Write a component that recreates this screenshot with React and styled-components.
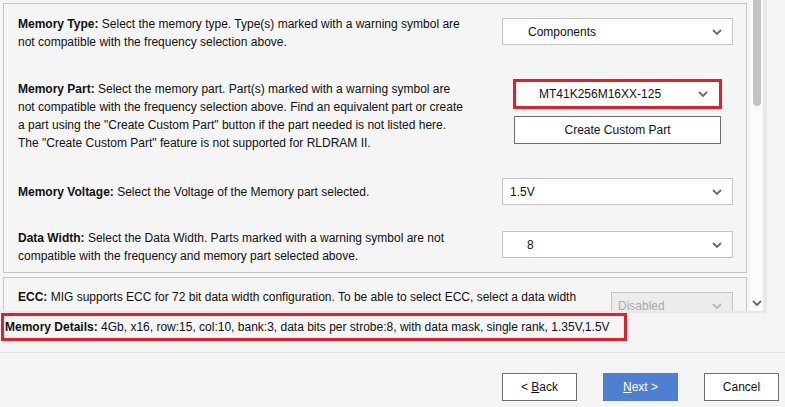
import React from "react";
import styled, { createGlobalStyle } from "styled-components";

const Global = createGlobalStyle`
  html, body { margin: 0; padding: 0; background: #f5f5f5; }
  body { font-family: "Liberation Sans", Arial, sans-serif; font-size: 12px; color: #111; }
  * { box-sizing: border-box; }
`;

const Page = styled.div`
  width: 785px;
  height: 407px;
  display: flex;
  flex-direction: column;
  overflow: hidden;
`;

const ScrollPane = styled.div`
  width: 767px;
  height: 313px;
  display: flex;
  border-right: 4px solid #e8e8e8;
  border-bottom: 2px solid #e8e8e8;
`;

const Content = styled.div`
  width: 750px;
  height: 311px;
  overflow: hidden;
  padding: 3px 3px 0 3px;
  display: flex;
  flex-direction: column;
  gap: 4px;
`;

const Panel = styled.div`
  border: 1px solid #c6c6c6;
  padding: ${(p) => p.$pad};
  flex-shrink: 0;
`;

const Row = styled.div`
  display: grid;
  grid-template-columns: 1fr ${(p) => p.$ctl || 231}px;
  align-items: start;
  margin-top: ${(p) => p.$mt || 0}px;
  padding-left: 14px;
  padding-right: 13px;
`;

const Desc = styled.div`
  padding-top: ${(p) => p.$off || 0}px;
  line-height: 18px;
  white-space: nowrap;
  color: #111;
  b { font-weight: bold; }
`;

const ControlCell = styled.div`
  padding-top: ${(p) => p.$off || 0}px;
  display: flex;
  flex-direction: column;
  align-items: center;
  gap: 7px;
`;

const Select = styled.div`
  position: relative;
  width: ${(p) => p.$w || 231}px;
  height: ${(p) => (p.$hl ? 30 : 27)}px;
  background: ${(p) => (p.$disabled ? "#ececec" : "#fff")};
  border: ${(p) => (p.$hl ? "3px solid #e61e2a" : "1px solid #c4c4c4")};
  display: flex;
  align-items: center;
  padding-left: ${(p) => p.$indent}px;
  padding-right: 10px;
  color: ${(p) => (p.$disabled ? "#a9a9a9" : "#111")};
  font-size: 12px;
  svg { position: absolute; right: ${(p) => (p.$hl ? 11 : 10)}px; top: 50%; margin-top: -3px; }
`;

const Button = styled.button`
  font-family: "Liberation Sans", Arial, sans-serif;
  font-size: 12px;
  width: ${(p) => p.$w || 75}px;
  height: 28px;
  background: ${(p) => (p.$primary ? "#4f7fd1" : "#fff")};
  color: ${(p) => (p.$primary ? "#fff" : "#111")};
  border: 1px solid ${(p) => (p.$primary ? "#4f7fd1" : "#6e6e6e")};
  padding: 0;
  cursor: default;
  u { text-decoration: underline; }
`;

const Scrollbar = styled.div`
  width: 13px;
  height: 311px;
  background: #fbfbfb;
  display: flex;
  flex-direction: column;
  justify-content: space-between;
  align-items: center;
  padding-bottom: 5px;
`;

const Thumb = styled.div`
  width: 8px;
  height: 106px;
  background: #c3c3c3;
  border-radius: 0 0 4px 4px;
`;

const Details = styled.div`
  align-self: flex-start;
  margin-left: 1px;
  height: 28px;
  border: 3px solid #e61e2a;
  padding: 0 14px 0 1px;
  line-height: 22px;
  white-space: nowrap;
  b { font-weight: bold; }
`;

const Separator = styled.div`
  margin-top: 11px;
  height: 1px;
  background: #e1e1e1;
`;

const ButtonBar = styled.div`
  margin-top: 20px;
  display: flex;
  justify-content: flex-end;
  gap: 26px;
  padding-right: 6px;
`;

const Chevron = ({ color = "#6a6a6a" }) => (
  <svg width="10" height="6" viewBox="0 0 10 6">
    <polyline points="1,1 5,5 9,1" fill="none" stroke={color} strokeWidth="1.8" />
  </svg>
);

export default function App() {
  return (
    <Page>
      <Global />
      <ScrollPane>
        <Content>
          <Panel $pad="11px 0 7px 0">
            <Row>
              <Desc>
                <b>Memory Type:</b> Select the memory type. Type(s) marked with a warning symbol are
                <br />
                not compatible with the frequency selection above.
              </Desc>
              <ControlCell $off={3}>
                <Select $indent={25}>
                  Components
                  <Chevron />
                </Select>
              </ControlCell>
            </Row>
            <Row $mt={28}>
              <Desc $off={1}>
                <b>Memory Part:</b> Select the memory part. Part(s) marked with a warning symbol are
                <br />
                not compatible with the frequency selection above. Find an equivalent part or create
                <br />
                a part using the "Create Custom Part" button if the part needed is not listed here.
                <br />
                The "Create Custom Part" feature is not supported for RLDRAM II.
              </Desc>
              <ControlCell>
                <Select $hl $w={209} $indent={23}>
                  MT41K256M16XX-125
                  <Chevron />
                </Select>
                <Button $w={207}>Create Custom Part</Button>
              </ControlCell>
            </Row>
            <Row $mt={26}>
              <Desc $off={5}>
                <b>Memory Voltage:</b> Select the Voltage of the Memory part selected.
              </Desc>
              <ControlCell>
                <Select $indent={7}>
                  1.5V
                  <Chevron />
                </Select>
              </ControlCell>
            </Row>
            <Row $mt={24}>
              <Desc>
                <b>Data Width:</b> Select the Data Width. Parts marked with a warning symbol are not
                <br />
                compatible with the frequency and memory part selected above.
              </Desc>
              <ControlCell $off={2}>
                <Select $indent={24}>
                  8
                  <Chevron />
                </Select>
              </ControlCell>
            </Row>
          </Panel>
          <Panel $pad="10px 0 20px 0">
            <Row $ctl={122}>
              <Desc>
                <b>ECC:</b> MIG supports ECC for 72 bit data width configuration. To be able to select ECC, select a data width
              </Desc>
              <ControlCell $off={4}>
                <Select $w={122} $indent={6} $disabled>
                  Disabled
                  <Chevron color="#b5b5b5" />
                </Select>
              </ControlCell>
            </Row>
          </Panel>
        </Content>
        <Scrollbar>
          <Thumb />
          <Chevron color="#666" />
        </Scrollbar>
      </ScrollPane>
      <Details>
        <b>Memory Details:</b> 4Gb, x16, row:15, col:10, bank:3, data bits per strobe:8, with data mask, single rank, 1.35V,1.5V
      </Details>
      <Separator />
      <ButtonBar>
        <Button>
          &lt; <u>B</u>ack
        </Button>
        <Button $primary>
          <u>N</u>ext &gt;
        </Button>
        <Button>Cancel</Button>
      </ButtonBar>
    </Page>
  );
}
